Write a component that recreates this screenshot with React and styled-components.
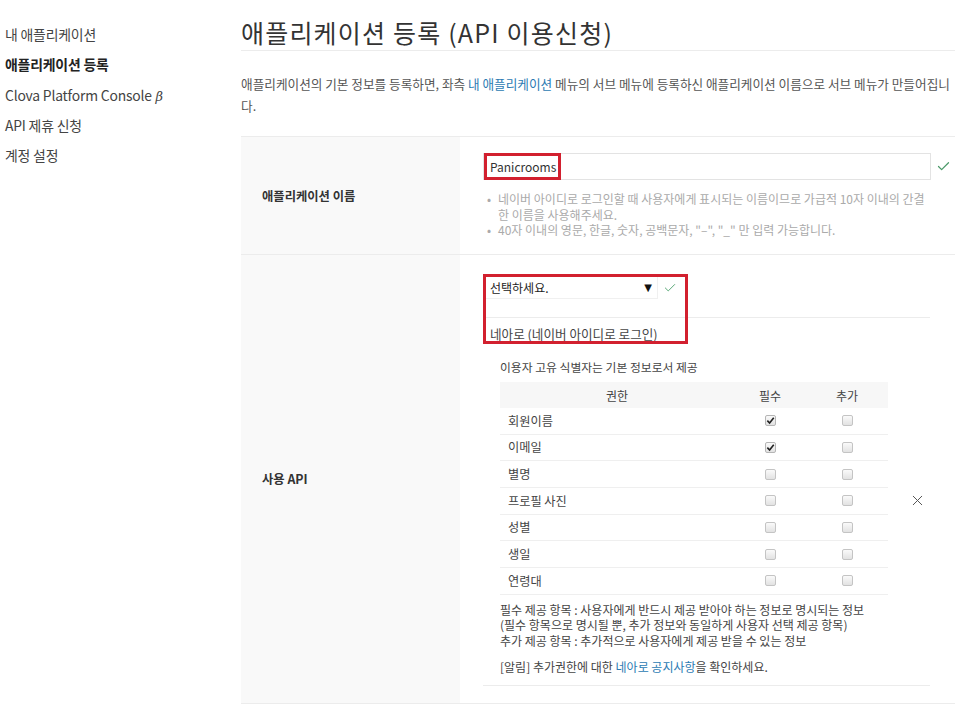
import React from "react";
import styled, { createGlobalStyle } from "styled-components";
import { Check, X } from "lucide-react";

const GlobalStyle = createGlobalStyle`
  body {
    margin: 0;
    background: #fff;
    font-family: "Noto Sans CJK KR", "Noto Sans", sans-serif;
    color: #333;
  }
`;

const menu = [
  { label: "내 애플리케이션" },
  { label: "애플리케이션 등록", active: true },
  { label: "Clova Platform Console", beta: true },
  { label: "API 제휴 신청" },
  { label: "계정 설정" },
];

const perms = [
  { name: "회원이름", required: true },
  { name: "이메일", required: true },
  { name: "별명" },
  { name: "프로필 사진" },
  { name: "성별" },
  { name: "생일" },
  { name: "연령대" },
];

const App = () => {
  return (
    <>
      <GlobalStyle />
      <Page>
        <Sidebar>
          {menu.map((m) => (
            <MenuItem key={m.label} $active={m.active}>
              {m.label}
              {m.beta && <Beta> β</Beta>}
            </MenuItem>
          ))}
        </Sidebar>
        <Main>
          <Title>애플리케이션 등록 (API 이용신청)</Title>
          <Description>
            애플리케이션의 기본 정보를 등록하면, 좌측 <Link>내 애플리케이션</Link> 메뉴의 서브 메뉴에
            등록하신 애플리케이션 이름으로 서브 메뉴가 만들어집니
            <br />
            다.
          </Description>

          <FormTable>
            <Row>
              <Label>애플리케이션 이름</Label>
              <Field>
                <InputLine>
                  <Input>
                    Panicrooms
                    <Highlight $w={77} $h={27} $top={-1} $left={0} />
                  </Input>
                  <OkMark>
                    <Check size={15} strokeWidth={2} />
                  </OkMark>
                </InputLine>
                <Hints>
                  <li>
                    <HintLine>네이버 아이디로 로그인할 때 사용자에게 표시되는 이름이므로 가급적 10자 이내의 간결</HintLine>
                    <HintLine>한 이름을 사용해주세요.</HintLine>
                  </li>
                  <li>
                    <HintLine>40자 이내의 영문, 한글, 숫자, 공백문자, "–", "_" 만 입력 가능합니다.</HintLine>
                  </li>
                </Hints>
              </Field>
            </Row>

            <Row>
              <Label>사용 API</Label>
              <Field>
                <ApiSelect>
                  <SelectLine>
                    <Select>
                      선택하세요.
                      <Arrow>▼</Arrow>
                    </Select>
                    <SmallOk>
                      <Check size={14} strokeWidth={1.7} />
                    </SmallOk>
                  </SelectLine>
                  <ApiName>네아로 (네이버 아이디로 로그인)</ApiName>
                  <Highlight $w={205} $h={70} $top={-2} $left={0} />
                </ApiSelect>

                <ApiDetail>
                  <Intro>이용자 고유 식별자는 기본 정보로서 제공</Intro>
                  <PermLine>
                    <PermTable>
                      <PermHead>
                        <Cell>권한</Cell>
                        <Cell>필수</Cell>
                        <Cell>추가</Cell>
                      </PermHead>
                      {perms.map((p) => (
                        <PermRow key={p.name}>
                          <Cell $left>{p.name}</Cell>
                          <Cell><Box $checked={p.required}>{p.required && <Tick />}</Box></Cell>
                          <Cell><Box /></Cell>
                        </PermRow>
                      ))}
                    </PermTable>
                    <Remove>
                      <X size={17} strokeWidth={1.4} />
                    </Remove>
                  </PermLine>
                  <Notes>
                    <p>필수 제공 항목 : 사용자에게 반드시 제공 받아야 하는 정보로 명시되는 정보</p>
                    <p>(필수 항목으로 명시될 뿐, 추가 정보와 동일하게 사용자 선택 제공 항목)</p>
                    <p>추가 제공 항목 : 추가적으로 사용자에게 제공 받을 수 있는 정보</p>
                    <Notice>
                      [알림] 추가권한에 대한 <Link>네아로 공지사항</Link>을 확인하세요.
                    </Notice>
                  </Notes>
                </ApiDetail>
              </Field>
            </Row>
          </FormTable>
        </Main>
      </Page>
    </>
  );
};

const Tick = () => (
  <svg width="9" height="9" viewBox="0 0 10 10">
    <path d="M1.5 5.2 L4 7.8 L8.6 2" fill="none" stroke="#222" strokeWidth="1.8" />
  </svg>
);

const Page = styled.div`
  display: flex;
  width: 966px;
  height: 705px;
  overflow: hidden;
`;

const Sidebar = styled.nav`
  width: 236px;
  flex-shrink: 0;
  padding: 19px 0 0 5px;
`;

const MenuItem = styled.div`
  font-size: 13.9px;
  height: 30.25px;
  line-height: 30px;
  color: ${(p) => (p.$active ? "#222" : "#444")};
  font-weight: ${(p) => (p.$active ? 700 : 400)};
  letter-spacing: -0.2px;
`;

const Beta = styled.span`
  font-style: italic;
  font-family: "DejaVu Serif", serif;
  font-size: 13px;
  line-height: 1;
`;

const Main = styled.main`
  width: 714px;
  flex-shrink: 0;
`;

const Title = styled.h1`
  margin: 14px 0 0;
  font-size: 25px;
  line-height: 36px;
  font-weight: 400;
  letter-spacing: 1.2px;
  color: #333;
  border-bottom: 1px solid #ececec;
`;

const Description = styled.p`
  margin: 22px 0 19px;
  font-size: 12.65px;
  line-height: 22px;
  color: #555;
  white-space: nowrap;
`;

const Link = styled.span`
  color: #2c7bb3;
`;

const FormTable = styled.div`
  border-top: 1px solid #ececec;
`;

const Row = styled.div`
  display: flex;
  border-bottom: 1px solid #ececec;
`;

const Label = styled.div`
  width: 198px;
  flex-shrink: 0;
  background: #f9f9f9;
  padding-left: 21px;
  display: flex;
  align-items: center;
  font-size: 12.3px;
  font-weight: 700;
  color: #333;
`;

const Field = styled.div`
  flex: 1;
  padding: 16px 25px 17px 23px;
`;

const InputLine = styled.div`
  display: flex;
  align-items: center;
`;

const Input = styled.div`
  position: relative;
  width: 448px;
  height: 27px;
  box-sizing: border-box;
  border: 1px solid #e3e3e3;
  padding-left: 6px;
  display: flex;
  align-items: center;
  font-size: 12px;
  color: #333;
`;

const Highlight = styled.span`
  position: absolute;
  top: ${(p) => p.$top}px;
  left: ${(p) => p.$left}px;
  width: ${(p) => p.$w}px;
  height: ${(p) => p.$h}px;
  box-sizing: border-box;
  border: 3px solid #d2202f;
  pointer-events: none;
`;

const OkMark = styled.span`
  display: flex;
  margin-left: 5px;
  color: #4c9a6a;
`;

const Hints = styled.ul`
  margin: 11px 0 -0.5px;
  padding: 0 0 0 4px;
  list-style: none;
  font-size: 12px;
  line-height: 15.5px;
  color: #aaa;
  white-space: nowrap;

  li {
    position: relative;
    padding-left: 11px;
  }

  li::before {
    content: "•";
    position: absolute;
    left: 0;
  }
`;

const HintLine = styled.span`
  display: block;
`;

const ApiSelect = styled.div`
  position: relative;
  margin-top: 5px;
`;

const SelectLine = styled.div`
  display: flex;
  align-items: center;
  padding-left: 1px;
  padding-bottom: 18px;
  border-bottom: 1px solid #ececec;
`;

const Select = styled.div`
  width: 174px;
  height: 23px;
  box-sizing: border-box;
  border: 1px solid #f0f0f0;
  padding: 0 5px;
  display: flex;
  align-items: center;
  justify-content: space-between;
  font-size: 12px;
  color: #222;
`;

const Arrow = styled.span`
  font-size: 10px;
  color: #111;
  font-family: "DejaVu Sans", sans-serif;
`;

const SmallOk = styled.span`
  display: flex;
  margin-left: 5px;
  color: #5aa877;
`;

const ApiName = styled.div`
  padding: 8px 0 0 7px;
  font-size: 12.6px;
  line-height: 16px;
  color: #444;
`;

const ApiDetail = styled.div`
  margin-top: 17px;
  padding-left: 17px;
  padding-bottom: 10px;
  border-bottom: 1px solid #ececec;
`;

const Intro = styled.div`
  font-size: 11.8px;
  line-height: 16px;
  color: #444;
`;

const PermLine = styled.div`
  display: flex;
  align-items: center;
  margin-top: 7px;
`;

const PermTable = styled.div`
  width: 388px;
`;

const PermHead = styled.div`
  display: grid;
  grid-template-columns: 234px 72px 82px;
  height: 26px;
  align-items: center;
  background: #f7f7f7;
  font-size: 12px;
  color: #444;
`;

const PermRow = styled.div`
  display: grid;
  grid-template-columns: 234px 72px 82px;
  height: 26.67px;
  box-sizing: border-box;
  align-items: center;
  border-bottom: 1px solid #efefef;
  font-size: 12.2px;
  color: #444;
`;

const Cell = styled.div`
  display: flex;
  align-items: center;
  justify-content: ${(p) => (p.$left ? "flex-start" : "center")};
  padding-left: ${(p) => (p.$left ? "8px" : "0")};
`;

const Box = styled.span`
  width: 11px;
  height: 11px;
  box-sizing: border-box;
  border: 1px solid ${(p) => (p.$checked ? "#b5b5b5" : "#c4c4c4")};
  border-radius: 2px;
  background: linear-gradient(#fafafa, #e2e2e2);
  display: flex;
  align-items: center;
  justify-content: center;
`;

const Remove = styled.span`
  display: flex;
  margin-left: 21px;
  margin-top: 24px;
  color: #555;
`;

const Notes = styled.div`
  margin-top: 7px;
  font-size: 12px;
  line-height: 15.5px;
  color: #444;

  p {
    margin: 0;
  }
`;

const Notice = styled.p`
  && {
    margin-top: 11px;
  }
`;

export default App;
